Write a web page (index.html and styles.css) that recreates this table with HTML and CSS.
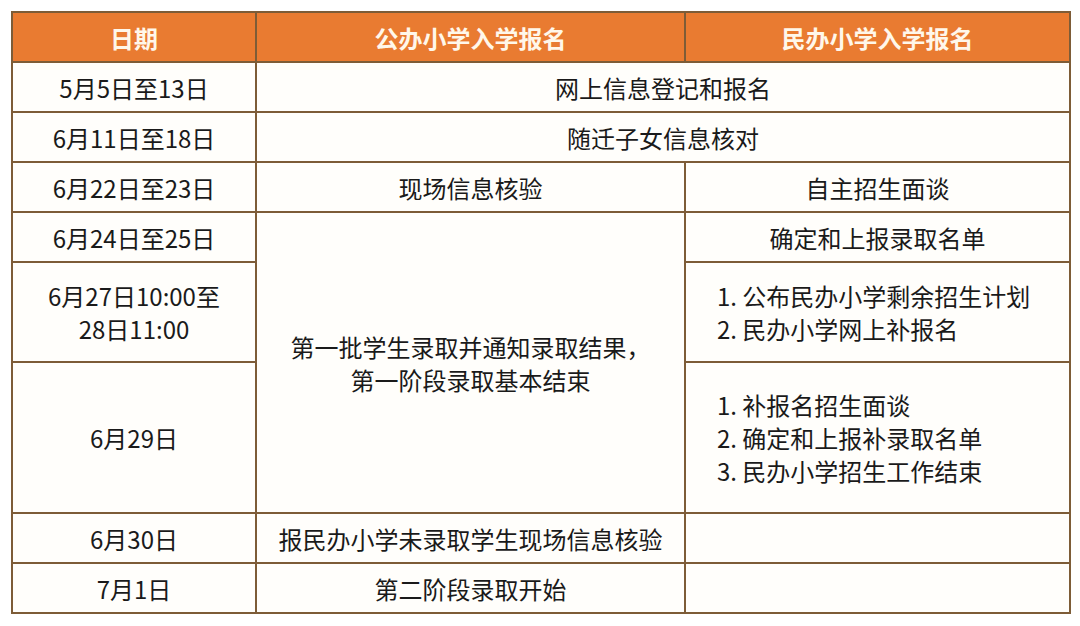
FILE: index.html
```html
<!DOCTYPE html>
<html lang="zh-CN">
<head>
<meta charset="utf-8">
<title>入学报名时间表</title>
<link rel="stylesheet" href="styles.css">
</head>
<body>
<table class="schedule">
  <colgroup>
    <col class="c-date">
    <col class="c-public">
    <col class="c-private">
  </colgroup>
  <thead>
    <tr class="r-head">
      <th>日期</th>
      <th>公办小学入学报名</th>
      <th>民办小学入学报名</th>
    </tr>
  </thead>
  <tbody>
    <tr class="r-std">
      <td>5月5日至13日</td>
      <td colspan="2">网上信息登记和报名</td>
    </tr>
    <tr class="r-std">
      <td>6月11日至18日</td>
      <td colspan="2">随迁子女信息核对</td>
    </tr>
    <tr class="r-std">
      <td>6月22日至23日</td>
      <td>现场信息核验</td>
      <td>自主招生面谈</td>
    </tr>
    <tr class="r-std">
      <td>6月24日至25日</td>
      <td rowspan="3">第一批学生录取并通知录取结果，<br>第一阶段录取基本结束</td>
      <td>确定和上报录取名单</td>
    </tr>
    <tr class="r-double">
      <td>6月27日10:00至<br>28日11:00</td>
      <td class="list">1. 公布民办小学剩余招生计划<br>2. 民办小学网上补报名</td>
    </tr>
    <tr class="r-triple">
      <td>6月29日</td>
      <td class="list">1. 补报名招生面谈<br>2. 确定和上报补录取名单<br>3. 民办小学招生工作结束</td>
    </tr>
    <tr class="r-std">
      <td>6月30日</td>
      <td>报民办小学未录取学生现场信息核验</td>
      <td></td>
    </tr>
    <tr class="r-std">
      <td>7月1日</td>
      <td>第二阶段录取开始</td>
      <td></td>
    </tr>
  </tbody>
</table>
</body>
</html>
```

FILE: styles.css
```css
html, body {
  margin: 0;
  padding: 0;
  background: #ffffff;
}

body {
  font-family: "Noto Sans CJK SC", "Noto Sans", sans-serif;
  color: #1a1a1a;
}

.schedule {
  margin: 11px 0 0 11px;
  width: 1058px;
  border-collapse: collapse;
  table-layout: fixed;
  background: #fffefb;
}

.c-date { width: 244px; }
.c-public { width: 429px; }
.c-private { width: 385px; }

.schedule th,
.schedule td {
  border: 2px solid #7d5c37;
  text-align: center;
  vertical-align: middle;
  padding: 0;
  font-size: 24px;
  line-height: 33px;
}

.schedule th {
  background: #e97b31;
  color: #fff7ea;
  font-weight: 700;
}

.r-head { height: 50px; }
.r-std { height: 50px; }
.r-double { height: 100px; }
.r-triple { height: 151px; }

.schedule td.list {
  text-align: left;
  padding-left: 31px;
}
```
